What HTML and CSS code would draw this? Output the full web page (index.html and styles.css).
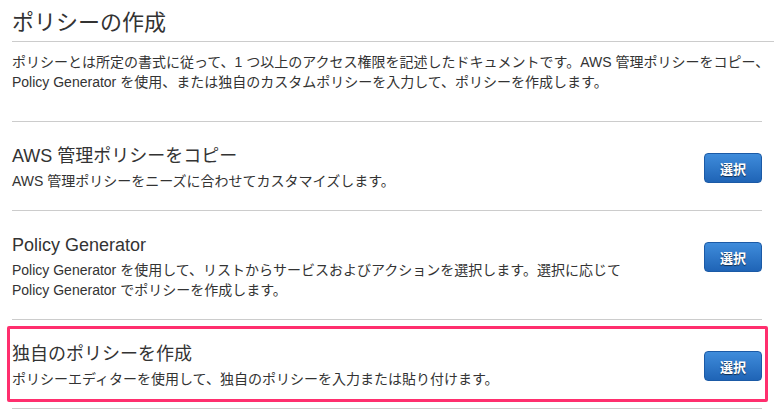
FILE: index.html
```html
<!DOCTYPE html>
<html>

<head>
	<meta charset="UTF-8">
	<title>ポリシーの作成</title>
	<link rel="stylesheet" href="styles.css">
</head>

<body>
	<section class="page">
		<h1 class="pageTitle">ポリシーの作成</h1>
		<p class="intro">
			ポリシーとは所定の書式に従って、1 つ以上のアクセス権限を記述したドキュメントです。AWS 管理ポリシーをコピー、<br>
			Policy Generator を使用、または独自のカスタムポリシーを入力して、ポリシーを作成します。
		</p>

		<ul class="options">
			<li class="option">
				<div class="optText">
					<h2>AWS 管理ポリシーをコピー</h2>
					<p>AWS 管理ポリシーをニーズに合わせてカスタマイズします。</p>
				</div>
				<input type="button" class="btn" value="選択" />
			</li>
			<li class="option">
				<div class="optText">
					<h2>Policy Generator</h2>
					<p>Policy Generator を使用して、リストからサービスおよびアクションを選択します。選択に応じて<br>Policy Generator でポリシーを作成します。</p>
				</div>
				<input type="button" class="btn" value="選択" />
			</li>
			<li class="option active">
				<div class="optText">
					<h2>独自のポリシーを作成</h2>
					<p>ポリシーエディターを使用して、独自のポリシーを入力または貼り付けます。</p>
				</div>
				<input type="button" class="btn" value="選択" />
			</li>
		</ul>
	</section>
</body>

</html>
```

FILE: styles.css
```css
body,
h1,
h2,
p {
	margin: 0;
}

ul {
	margin: 0;
	padding: 0;
	list-style: none;
}

body {
	font-family: "Liberation Sans", "Noto Sans CJK JP", sans-serif;
	color: #333;
	background: #fff;
}

.page {
	padding-left: 12px;
}

.pageTitle {
	padding: 9px 0 4px;
	font-size: 22px;
	line-height: 28px;
	font-weight: normal;
	border-bottom: 1px solid #ccc;
}

.intro {
	width: 750px;
	padding: 10px 0 29px;
	font-size: 14px;
	line-height: 20px;
	border-bottom: 1px solid #ccc;
	white-space: nowrap;
}

.option {
	position: relative;
	display: flex;
	justify-content: space-between;
	align-items: flex-start;
	width: 750px;
	padding: 23px 0 19px;
	border-bottom: 1px solid #ccc;
}

.optText h2 {
	font-size: 18px;
	line-height: 22px;
	font-weight: normal;
}

.optText p {
	margin-top: 4px;
	font-size: 14px;
	line-height: 20px;
	white-space: nowrap;
}

.btn {
	margin-top: 8px;
	width: 58px;
	height: 30px;
	border: 1px solid #1b5aa6;
	border-radius: 4px;
	background: linear-gradient(#3f8cdb, #1f64b6);
	color: #fff;
	font-family: "Liberation Sans", "Noto Sans CJK JP", sans-serif;
	font-size: 13px;
	font-weight: bold;
	text-shadow: 0 1px 1px rgba(0, 0, 0, .6);
	outline: none;
	cursor: pointer;
}

/* 選択中の枠 */
.option.active::after {
	content: "";
	position: absolute;
	top: 6px;
	bottom: 6px;
	left: -5px;
	right: -6px;
	border: 3px solid #ff2f6e;
	border-radius: 2px;
	pointer-events: none;
}
```
